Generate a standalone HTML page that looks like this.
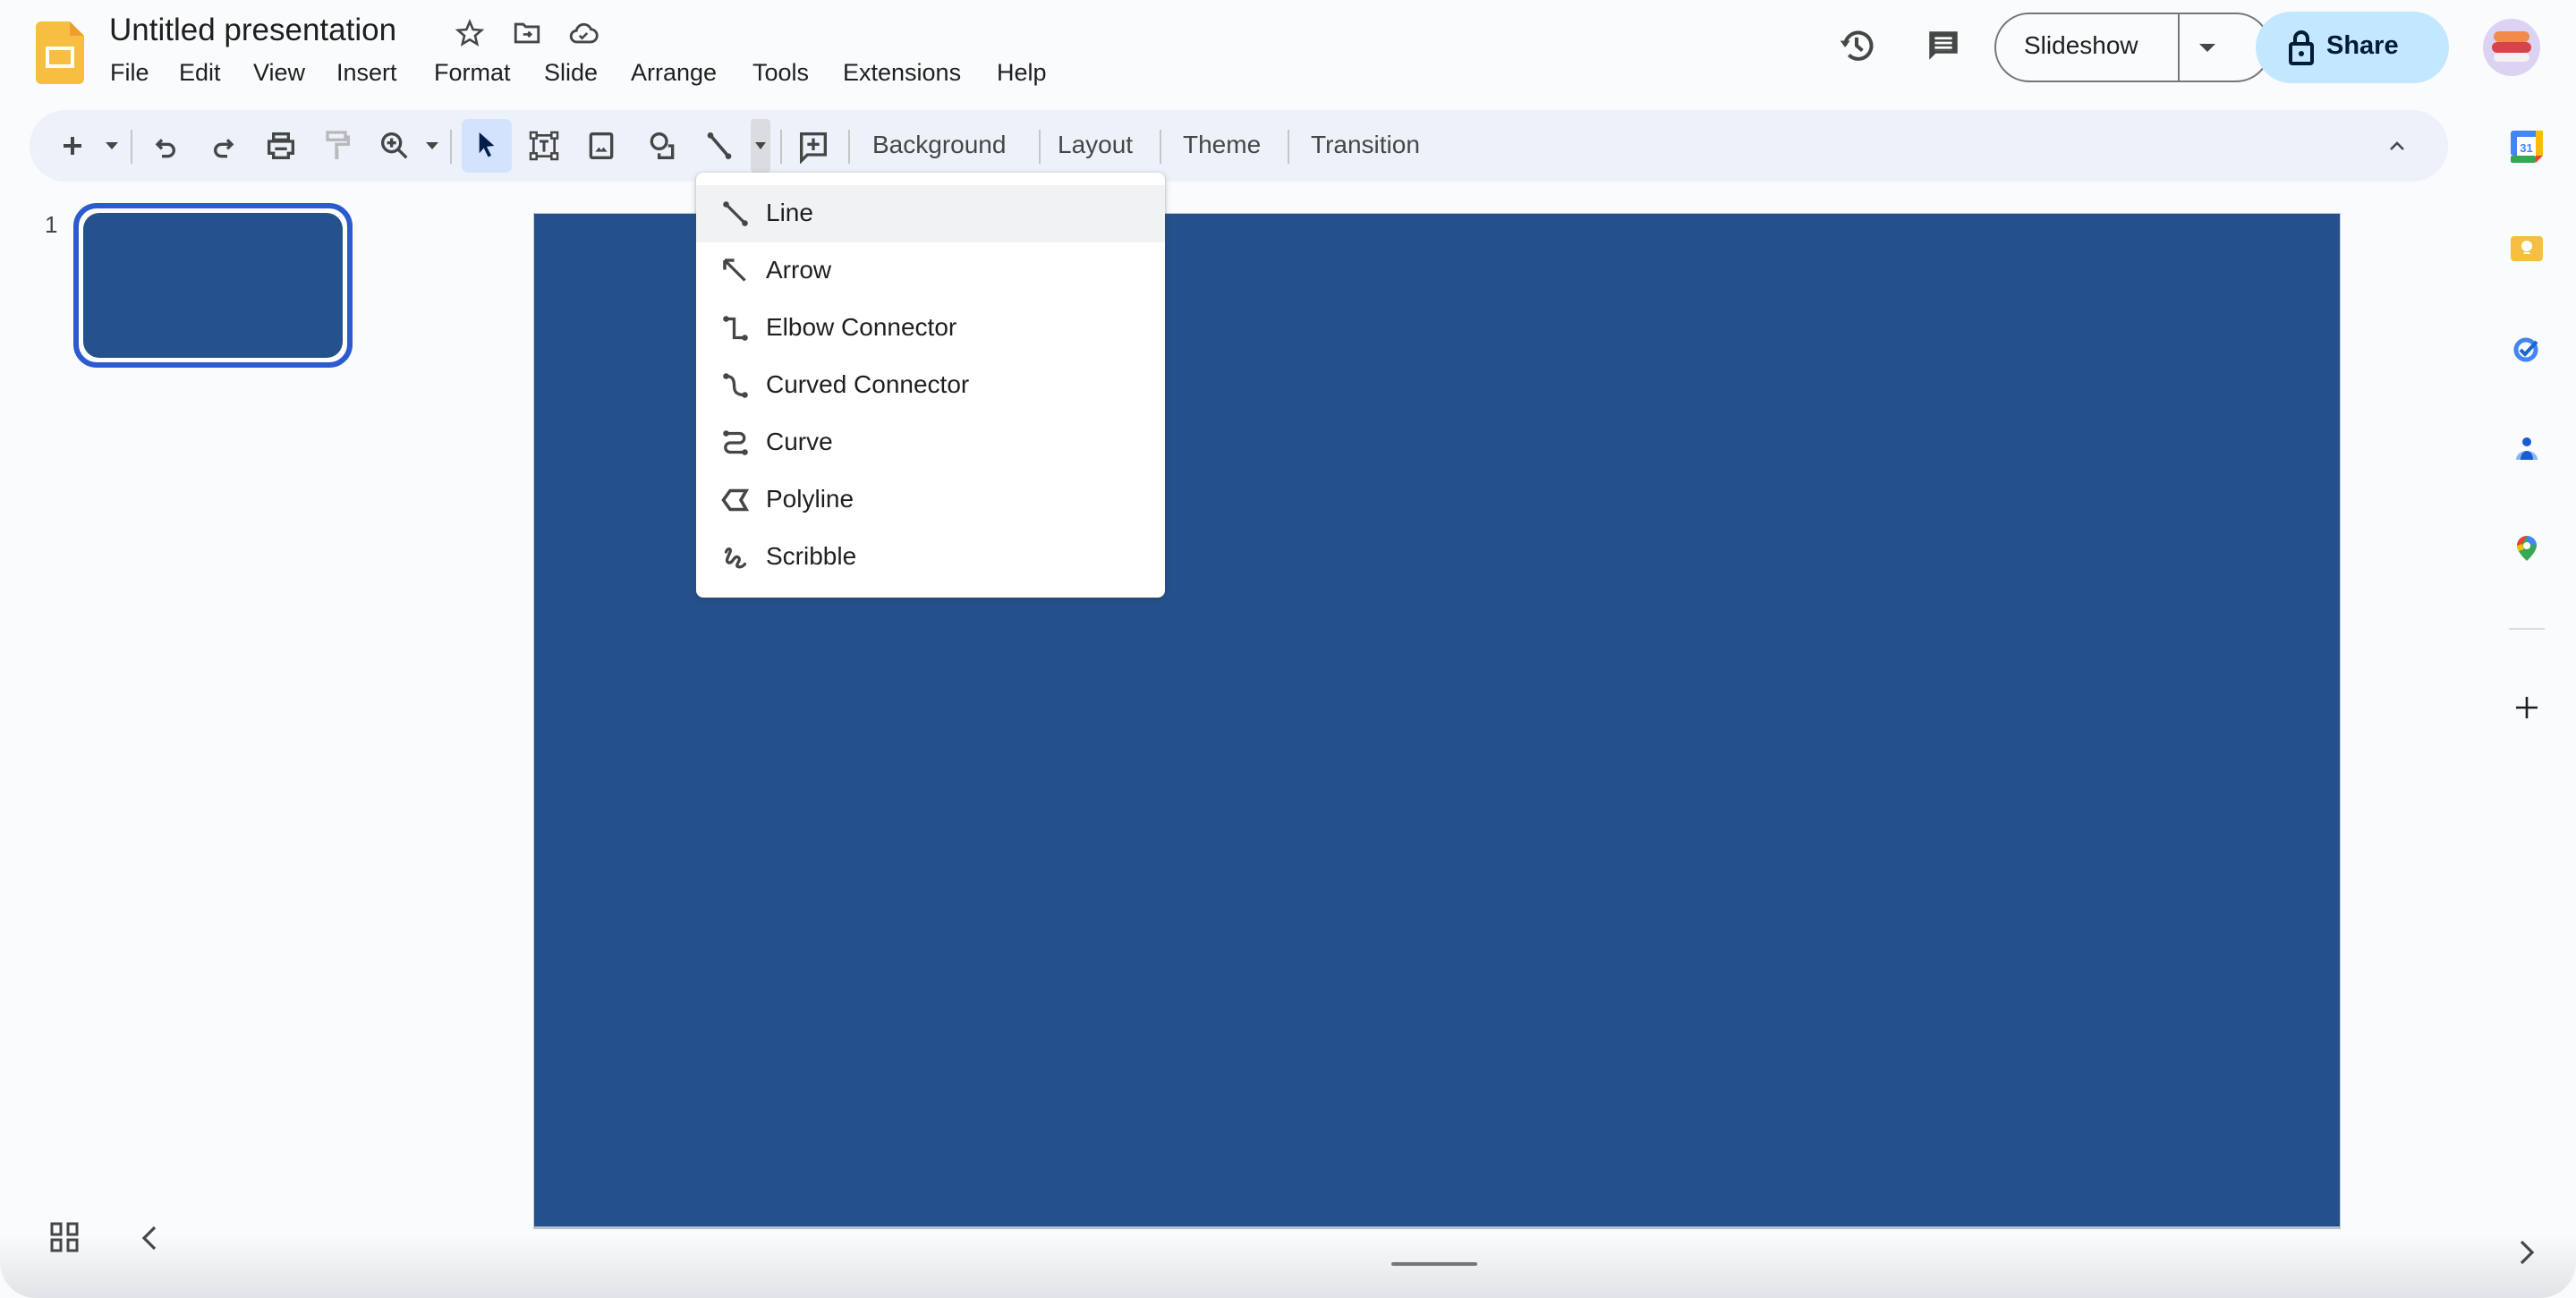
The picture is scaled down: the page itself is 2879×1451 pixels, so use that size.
<!DOCTYPE html>
<html><head><meta charset="utf-8"><style>
*{margin:0;padding:0;box-sizing:border-box}
body{width:2879px;height:1451px;background:#f9fbfd;position:relative;overflow:hidden;font-family:"Liberation Sans",Arial,sans-serif;color:#1f1f1f}
.a{position:absolute}
.menu span{position:absolute;top:66px;font-size:27px;color:#1f1f1f}
.tb{position:absolute;top:143px;width:40px;height:40px}
.tt{position:absolute;top:146px;font-size:28px;color:#444746}
.sep{position:absolute;top:145px;width:2px;height:38px;background:#c4c7c5}
.mi{position:absolute;left:778px;width:524px;height:64px}
.mi span{position:absolute;left:78px;top:15px;font-size:28px;color:#1f1f1f}
.mi svg{position:absolute;left:26px;top:14px}
.side{position:absolute;left:2806px;width:36px;height:36px}
</style></head><body>

<!-- logo -->
<svg class="a" style="left:40px;top:24px" width="54" height="70" viewBox="0 0 54 70">
<path d="M5 0H38L54 16V64a6 6 0 0 1-6 6H6a6 6 0 0 1-6-6V6a6 6 0 0 1 5-6z" fill="#f6bf41"/>
<path d="M38 0L54 16H38z" fill="#ef9e2d"/>
<rect x="11" y="28" width="32" height="24" fill="#fff"/><rect x="15" y="32" width="24" height="16" fill="#f6bf41"/>
</svg>
<div class="a" style="left:122px;top:14px;font-size:35px;color:#1f1f1f">Untitled presentation</div>
<svg class="a" style="left:508px;top:20px" width="34" height="34" viewBox="0 0 24 24"><path d="M12 3l2.6 6.2 6.7.5-5.1 4.4 1.6 6.5L12 17.1 6.2 20.6l1.6-6.5-5.1-4.4 6.7-.5z" fill="none" stroke="#444746" stroke-width="1.8"/></svg>
<svg class="a" style="left:572px;top:20px" width="34" height="34" viewBox="0 0 24 24"><path d="M3 5h6l2 2h10v12H3z" fill="none" stroke="#444746" stroke-width="2"/><path d="M9 13h6m-2-2l2 2-2 2" fill="none" stroke="#444746" stroke-width="1.8"/></svg>
<svg class="a" style="left:633px;top:20px" width="38" height="34" viewBox="0 0 24 24"><path d="M7 19a4.5 4.5 0 0 1-.5-9A6 6 0 0 1 18 9a4.5 4.5 0 0 1-.5 10z" fill="none" stroke="#444746" stroke-width="2"/><path d="M9 14l2 2 4-4" fill="none" stroke="#444746" stroke-width="1.8"/></svg>

<div class="menu">
<span style="left:123px">File</span><span style="left:200px">Edit</span><span style="left:283px">View</span><span style="left:376px">Insert</span><span style="left:485px">Format</span><span style="left:608px">Slide</span><span style="left:705px">Arrange</span><span style="left:841px">Tools</span><span style="left:942px">Extensions</span><span style="left:1114px">Help</span>
</div>

<!-- top right -->
<svg class="a" style="left:2053px;top:29px" width="44" height="44" viewBox="0 0 24 24"><path d="M5 12a8 8 0 1 1 2.3 5.7" fill="none" stroke="#444746" stroke-width="2.2"/><path d="M2 9l3 4 3-4" fill="#444746"/><path d="M12 7v5l3.5 3" fill="none" stroke="#444746" stroke-width="2.2"/></svg>
<svg class="a" style="left:2151px;top:30px" width="42" height="42" viewBox="0 0 24 24"><path d="M3 3h18v14H7l-4 4z" fill="#444746"/><path d="M6 6h12v2H6zm0 3.5h12v2H6zm0 3.5h12v2H6z" fill="#fff"/><rect x="5" y="5" width="14" height="10" fill="#444746"/><path d="M6.5 6.5h11v1.6h-11zm0 3h11v1.6h-11zm0 3h11v1.6h-11z" fill="#fff"/></svg>
<div class="a" style="left:2229px;top:14px;width:309px;height:78px;border:2px solid #747775;border-radius:39px"></div>
<div class="a" style="left:2434px;top:15px;width:2px;height:76px;background:#747775"></div>
<div class="a" style="left:2262px;top:35px;font-size:28px;color:#1f1f1f">Slideshow</div>
<div class="a" style="left:2458px;top:49px;border-left:9px solid transparent;border-right:9px solid transparent;border-top:9px solid #444746"></div>
<div class="a" style="left:2521px;top:13px;width:216px;height:80px;background:#c2e7ff;border-radius:40px"></div>
<svg class="a" style="left:2556px;top:33px" width="32" height="40" viewBox="0 0 16 20"><rect x="2" y="8" width="12" height="11" rx="1" fill="none" stroke="#001d35" stroke-width="2"/><path d="M4.5 8V5a3.5 3.5 0 0 1 7 0v3" fill="none" stroke="#001d35" stroke-width="2"/><circle cx="8" cy="13.5" r="1.5" fill="#001d35"/></svg>
<div class="a" style="left:2600px;top:35px;font-size:29px;font-weight:bold;color:#001d35">Share</div>
<div class="a" style="left:2775px;top:21px;width:64px;height:64px;border-radius:50%;background:#dcd3f2;overflow:hidden">
<div class="a" style="left:12px;top:14px;width:40px;height:12px;border-radius:6px;background:#f28a4a"></div>
<div class="a" style="left:10px;top:26px;width:44px;height:12px;border-radius:6px;background:#d8424a"></div>
<div class="a" style="left:12px;top:38px;width:40px;height:10px;border-radius:5px;background:#f2f2f2"></div>
</div>

<!-- toolbar -->
<div class="a" style="left:33px;top:123px;width:2703px;height:80px;background:#edf2fa;border-radius:40px"></div>
<div class="a" style="left:516px;top:133px;width:56px;height:60px;background:#d3e3fd;border-radius:7px"></div>
<div class="a" style="left:839px;top:133px;width:22px;height:60px;background:#dadce0;border-radius:4px"></div>
<svg class="tb" style="left:61px" viewBox="0 0 24 24"><path d="M12 6v12M6 12h12" stroke="#444746" stroke-width="2.4"/></svg>
<div class="a" style="left:118px;top:159px;border-left:7px solid transparent;border-right:7px solid transparent;border-top:8px solid #444746"></div>
<div class="sep" style="left:146px"></div>
<svg class="tb" style="left:166px" viewBox="0 0 24 24"><path d="M9 8L6 11l3 3" fill="none" stroke="#444746" stroke-width="2"/><path d="M6 11h7a4 4 0 0 1 0 8h-4" fill="none" stroke="#444746" stroke-width="2"/></svg>
<svg class="tb" style="left:229px" viewBox="0 0 24 24"><path d="M15 8l3 3-3 3" fill="none" stroke="#444746" stroke-width="2"/><path d="M18 11h-7a4 4 0 0 0 0 8h4" fill="none" stroke="#444746" stroke-width="2"/></svg>
<svg class="tb" style="left:294px" viewBox="0 0 24 24"><path d="M7 4h10v4H7z M4 9h16v8h-3v3H7v-3H4z" fill="none" stroke="#444746" stroke-width="2"/><path d="M8 14h8" stroke="#444746" stroke-width="2"/></svg>
<svg class="tb" style="left:356px" viewBox="0 0 24 24"><rect x="6" y="3" width="12" height="5" fill="none" stroke="#b7b9bb" stroke-width="2"/><path d="M18 6h2v5h-8v3" fill="none" stroke="#b7b9bb" stroke-width="2"/><rect x="11" y="14" width="2.4" height="7" fill="#b7b9bb"/></svg>
<svg class="tb" style="left:421px" viewBox="0 0 24 24"><circle cx="10" cy="10" r="6" fill="none" stroke="#444746" stroke-width="2"/><path d="M14.5 14.5L20 20M10 7v6M7 10h6" stroke="#444746" stroke-width="2"/></svg>
<div class="a" style="left:476px;top:159px;border-left:7px solid transparent;border-right:7px solid transparent;border-top:8px solid #444746"></div>
<div class="sep" style="left:503px"></div>
<svg class="tb" style="left:524px" viewBox="0 0 24 24"><path d="M7 3l10 9-5 .5 3 6-2 1-3-6-3 3.5z" fill="#041e49"/></svg>
<svg class="tb" style="left:588px" viewBox="0 0 24 24"><rect x="5" y="5" width="14" height="14" fill="none" stroke="#444746" stroke-width="1.6"/><rect x="3" y="3" width="4" height="4" fill="#fff" stroke="#444746" stroke-width="1.5"/><rect x="17" y="3" width="4" height="4" fill="#fff" stroke="#444746" stroke-width="1.5"/><rect x="3" y="17" width="4" height="4" fill="#fff" stroke="#444746" stroke-width="1.5"/><rect x="17" y="17" width="4" height="4" fill="#fff" stroke="#444746" stroke-width="1.5"/><path d="M9 9h6M12 9v7" stroke="#444746" stroke-width="1.8"/></svg>
<svg class="tb" style="left:652px" viewBox="0 0 24 24"><rect x="5" y="4" width="14" height="16" rx="1" fill="none" stroke="#444746" stroke-width="2"/><path d="M8 16l2.5-3 1.5 2 1.5-2 2.5 3z" fill="#444746"/></svg>
<svg class="tb" style="left:720px" viewBox="0 0 24 24"><circle cx="10" cy="9" r="5" fill="none" stroke="#444746" stroke-width="2"/><path d="M16 12h3v8h-9v-3" fill="none" stroke="#444746" stroke-width="2"/></svg>
<svg class="tb" style="left:784px" viewBox="0 0 24 24"><path d="M6 5l12 14" stroke="#444746" stroke-width="2.2"/><circle cx="6" cy="5" r="2" fill="#444746"/><circle cx="18" cy="19" r="2" fill="#444746"/></svg>
<div class="a" style="left:844px;top:159px;border-left:6px solid transparent;border-right:6px solid transparent;border-top:8px solid #444746"></div>
<div class="sep" style="left:872px"></div>
<svg class="tb" style="left:889px" viewBox="0 0 24 24"><path d="M4 4h16v14H8l-4 4z" fill="none" stroke="#444746" stroke-width="2"/><path d="M12 7v8M8 11h8" stroke="#444746" stroke-width="2"/></svg>
<div class="sep" style="left:948px"></div>
<div class="tt" style="left:975px">Background</div>
<div class="sep" style="left:1161px"></div>
<div class="tt" style="left:1182px">Layout</div>
<div class="sep" style="left:1296px"></div>
<div class="tt" style="left:1322px">Theme</div>
<div class="sep" style="left:1439px"></div>
<div class="tt" style="left:1465px">Transition</div>
<svg class="a" style="left:2665px;top:151px" width="28" height="24" viewBox="0 0 24 24"><path d="M5 16l7-7 7 7" fill="none" stroke="#444746" stroke-width="2.6"/></svg>

<!-- filmstrip -->
<div class="a" style="left:50px;top:236px;font-size:26px;color:#444746">1</div>
<div class="a" style="left:82px;top:227px;width:312px;height:184px;border:6px solid #2c5bd0;border-radius:26px;background:#fff"></div>
<div class="a" style="left:93px;top:238px;width:290px;height:162px;background:#25528d;border-radius:18px"></div>

<!-- slide -->
<div class="a" style="left:596px;top:238px;width:2020px;height:1136px;background:#24518c;border:1px solid #c7cbd2;border-bottom:3px solid #b9c3d0"></div>

<!-- bottom shade -->
<div class="a" style="left:0;top:1380px;width:2879px;height:71px;background:linear-gradient(#f9fbfd00,#e1e3e6);border-radius:0 0 40px 40px"></div>
<svg class="a" style="left:56px;top:1366px" width="32" height="34" viewBox="0 0 16 17"><g fill="none" stroke="#444746" stroke-width="1.5"><rect x="1" y="1" width="5" height="6"/><rect x="10" y="1" width="5" height="6"/><rect x="1" y="10" width="5" height="6"/><rect x="10" y="10" width="5" height="6"/></g></svg>
<svg class="a" style="left:155px;top:1370px" width="24" height="28" viewBox="0 0 12 14"><path d="M9 1L3 7l6 6" fill="none" stroke="#444746" stroke-width="1.6"/></svg>
<div class="a" style="left:1555px;top:1411px;width:96px;height:4px;background:#747775;border-radius:2px"></div>
<svg class="a" style="left:2812px;top:1386px" width="24" height="28" viewBox="0 0 12 14"><path d="M3 1l6 6-6 6" fill="none" stroke="#444746" stroke-width="1.6"/></svg>

<!-- side panel -->
<svg class="side" style="top:146px" viewBox="0 0 36 36"><rect x="0" y="0" width="36" height="28" rx="3" fill="#4285f4"/><rect x="28" y="0" width="8" height="28" fill="#fbbc04"/><rect x="0" y="28" width="28" height="8" rx="2" fill="#34a853"/><path d="M28 28h8l-8 8z" fill="#ea4335"/><rect x="7" y="7" width="21" height="21" fill="#fff"/><text x="17.5" y="24" font-size="13" font-weight="bold" text-anchor="middle" fill="#4285f4" font-family="Liberation Sans">31</text></svg>
<svg class="side" style="top:260px" viewBox="0 0 36 36"><rect x="0" y="4" width="36" height="28" rx="4" fill="#f6bf41"/><circle cx="18" cy="15" r="6" fill="#fff"/><rect x="14.5" y="22" width="7" height="2" fill="#fff"/></svg>
<svg class="side" style="top:372px" viewBox="0 0 36 36"><circle cx="17" cy="19" r="11" fill="none" stroke="#4285f4" stroke-width="5"/><path d="M11 19l5 5 13-14" fill="none" stroke="#1967d2" stroke-width="4"/></svg>
<svg class="side" style="top:484px" viewBox="0 0 36 36"><circle cx="18" cy="10" r="5" fill="#1a5dd1"/><path d="M6 30a12 10 0 0 1 24 0z" fill="#8ab4f8"/><path d="M11 30a7 10 0 0 1 14 0z" fill="#1a5dd1"/></svg>
<svg class="side" style="top:595px" viewBox="0 0 36 36"><path d="M18 4a11 11 0 0 1 11 11c0 7-11 17-11 17S7 22 7 15A11 11 0 0 1 18 4z" fill="#34a853"/><path d="M7 15A11 11 0 0 1 18 4l-5 9z" fill="#ea4335"/><path d="M18 4a11 11 0 0 1 11 11l-10-3z" fill="#4285f4"/><path d="M7 15l6-2 2 6-6 2z" fill="#fbbc04"/><circle cx="18" cy="15" r="4" fill="#fff"/></svg>
<div class="a" style="left:2804px;top:702px;width:40px;height:2px;background:#dadce0"></div>
<svg class="side" style="top:773px" viewBox="0 0 36 36"><path d="M18 6v24M6 18h24" stroke="#1f1f1f" stroke-width="2.6"/></svg>

<!-- dropdown menu -->
<div class="a" style="left:778px;top:193px;width:524px;height:475px;background:#fff;border-radius:8px;box-shadow:0 2px 8px rgba(60,64,67,.2),0 1px 3px rgba(60,64,67,.3)"></div>
<div class="mi" style="top:207px;background:#f1f2f4"><svg width="36" height="36" viewBox="0 0 24 24"><path d="M5 5l14 14" stroke="#444746" stroke-width="2.2"/><circle cx="5" cy="5" r="2.2" fill="#444746"/><circle cx="19" cy="19" r="2.2" fill="#444746"/></svg><span>Line</span></div>
<div class="mi" style="top:271px"><svg width="36" height="36" viewBox="0 0 24 24"><path d="M5 5l14 14" stroke="#444746" stroke-width="2.2"/><path d="M4 4h7M4 4v7" stroke="#444746" stroke-width="2.4"/></svg><span>Arrow</span></div>
<div class="mi" style="top:335px"><svg width="36" height="36" viewBox="0 0 24 24"><path d="M5 5h6v14h8" fill="none" stroke="#444746" stroke-width="2.2"/><circle cx="5" cy="5" r="2.2" fill="#444746"/><circle cx="19" cy="19" r="2.2" fill="#444746"/></svg><span>Elbow Connector</span></div>
<div class="mi" style="top:399px"><svg width="36" height="36" viewBox="0 0 24 24"><path d="M5 5c5 0 6 3 6 7s1 7 8 7" fill="none" stroke="#444746" stroke-width="2.2"/><circle cx="5" cy="5" r="2.2" fill="#444746"/><circle cx="19" cy="19" r="2.2" fill="#444746"/></svg><span>Curved Connector</span></div>
<div class="mi" style="top:463px"><svg width="36" height="36" viewBox="0 0 24 24"><path d="M5 5h10a3.5 3.5 0 0 1 0 7H8a3.5 3.5 0 0 0 0 7h11" fill="none" stroke="#444746" stroke-width="2.2"/><circle cx="5" cy="5" r="2.2" fill="#444746"/><circle cx="19" cy="19" r="2.2" fill="#444746"/></svg><span>Curve</span></div>
<div class="mi" style="top:527px"><svg width="36" height="36" viewBox="0 0 24 24"><path d="M8 5h12l-4 7 4 7H8l-5-7z" fill="none" stroke="#444746" stroke-width="2.4"/></svg><span>Polyline</span></div>
<div class="mi" style="top:591px"><svg width="36" height="36" viewBox="0 0 24 24"><path d="M5 8c1-3 4-3 3 0s-4 7-1 8 4-6 7-4-3 6 0 7 5-2 5-2" fill="none" stroke="#444746" stroke-width="2.2" stroke-linecap="round"/></svg><span>Scribble</span></div>

</body></html>
